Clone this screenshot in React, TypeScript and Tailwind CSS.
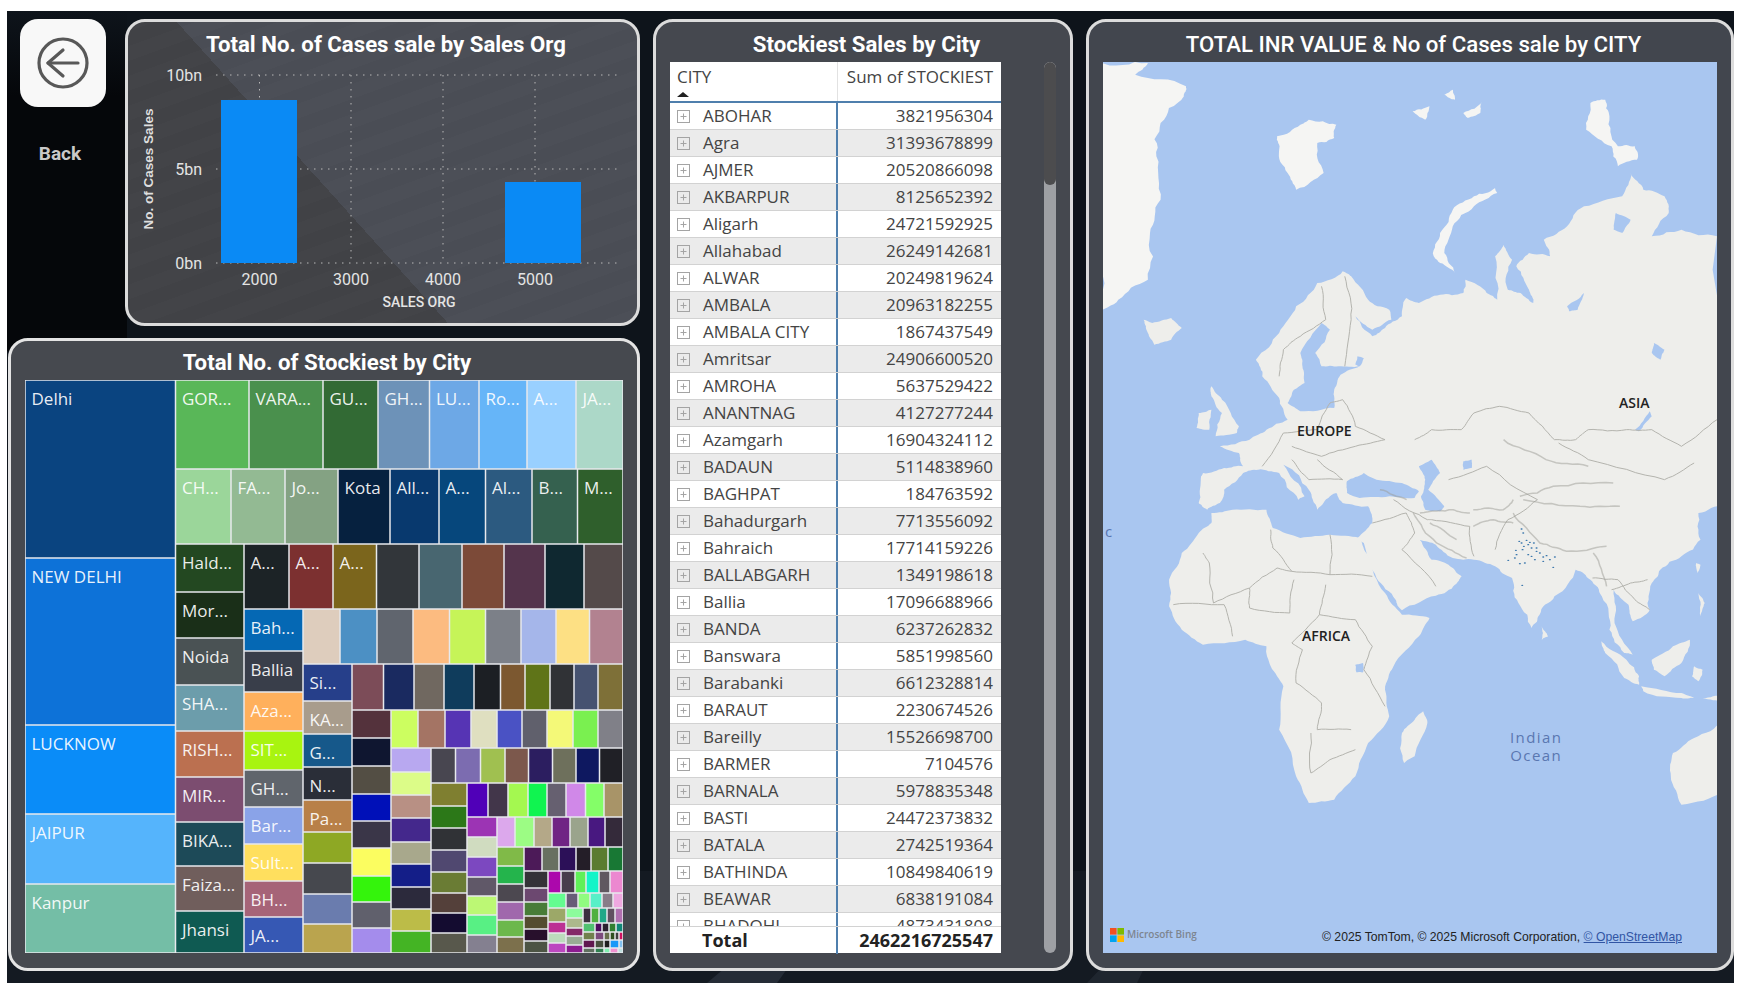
import React from 'react';

type Cell = { x: number; y: number; w: number; h: number; color: string; label?: string };

// items are "color" or "color|label"
const row = (y0: number, y1: number, xs: number[], items: string[]): Cell[] =>
  items.map((it, i) => {
    const [color, label] = it.split('|');
    return { x: xs[i], y: y0, w: xs[i + 1] - xs[i], h: y1 - y0, color, label };
  });

const col = (x0: number, x1: number, ys: number[], items: string[]): Cell[] =>
  items.map((it, i) => {
    const [color, label] = it.split('|');
    return { x: x0, y: ys[i], w: x1 - x0, h: ys[i + 1] - ys[i], color, label };
  });

const cells: Cell[] = [
  ...col(25, 175.5, [380, 558, 725, 814, 884, 953], ['#0a4480|Delhi', '#0d72d8|NEW DELHI', '#0a8cf8|LUCKNOW', '#55b4fc|JAIPUR', '#74bea6|Kanpur']),
  ...row(380, 469, [175.5, 249, 323, 378, 429.5, 479, 527, 576, 623], ['#59b758|GOR...', '#4a904d|VARA...', '#326a34|GU...', '#6d92b8|GH...', '#6da8e6|LU...', '#66b5f8|Ro...', '#99d0ff|A...', '#acd8c8|JA...']),
  ...row(469, 544, [175.5, 231, 285, 338, 390, 439, 485.5, 532, 577.5, 623], ['#9bd69a|CH...', '#93ba93|FA...', '#84a283|Jo...', '#06213f|Kota', '#08396e|All...', '#06477c|A...', '#2c5a80|Al...', '#35614f|B...', '#2f5f2c|M...']),
  ...col(175.5, 244, [544, 592, 638, 685, 731, 777, 822, 866, 911, 953], ['#234821|Hald...', '#1a2f18|Mor...', '#4a5254|Noida', '#6c9dab|SHA...', '#bb7050|RISH...', '#7c4d70|MIR...', '#1d4a58|BIKA...', '#705e5c|Faiza...', '#0f5a52|Jhansi']),
  ...row(544, 609, [244, 289, 333, 376.5, 419, 462, 504, 545, 584, 623], ['#1c2326|A...', '#7c3030|A...', '#7b651c|A...', '#32363a', '#486670', '#7c4a38', '#54344c', '#0f2830', '#544a4a']),
  ...col(244, 303, [609, 651, 692, 731, 770, 807, 844, 881, 917, 953], ['#0568b4|Bah...', '#393e4a|Ballia', '#ffb05c|Aza...', '#a8f410|SIT...', '#60656c|GH...', '#8aa3e8|Bar...', '#ffdf5e|Sult...', '#a66478|BH...', '#3658b4|JA...']),
  ...row(609, 664, [303, 340, 377, 413, 449.5, 485.5, 521, 556, 589.5, 623], ['#decdbd', '#4c90c4', '#60656e', '#fcbb80', '#c6f458', '#7c8088', '#a5b6ea', '#fde084', '#b28290']),
  ...col(303, 352, [664, 701, 734, 767, 800, 832, 863, 894, 924, 953], ['#263f8a|Si...', '#a89c8c|KA...', '#16588a|G...', '#2a2e38|N...', '#b88048|Pa...', '#8ea824', '#46484e', '#6a7cae', '#baa44e']),
  ...row(664, 710, [352, 383.5, 414, 444, 474, 500.5, 525, 550, 574, 598, 623], ['#7c4c58', '#1a2a60', '#706860', '#0f3c5c', '#1c1f24', '#7c5830', '#5f7418', '#303236', '#465270', '#7e7038']),
  ...col(352, 391, [710, 738, 766, 794, 821, 848, 876, 902, 928, 953], ['#54323c', '#0f1630', '#534e44', '#0010b8', '#3a3648', '#fbfd60', '#34f40c', '#60606c', '#a48cec']),
  ...row(710, 748, [391, 418, 445, 471, 497, 522, 547, 573, 598, 623], ['#ccfe60', '#a47464', '#5634b4', '#dfdfc0', '#4a52c4', '#60606c', '#f4f978', '#7af050', '#808088']),
  ...col(391, 431, [748, 772, 795, 818, 842, 864, 887, 909, 931, 953], ['#b8a8f0', '#dcfc88', '#b89084', '#44288c', '#a8a88c', '#141e88', '#2c2a3c', '#bcbc48', '#44b424']),
  ...row(748, 783, [431, 455.5, 480.5, 505, 528.5, 552.5, 576, 599.5, 623], ['#484650', '#7c6cb0', '#a0c050', '#7c584c', '#2c1e60', '#6e705c', '#0e1860', '#202026']),
  ...col(431, 467, [783, 806, 828, 850, 872, 893, 913, 933, 953], ['#7f7f30', '#2c7818', '#303236', '#504870', '#6a7c34', '#54403a', '#140c30', '#58584c']),
  ...row(783, 817, [467, 488, 508, 528, 547, 566, 585.5, 604, 623], ['#5000b8', '#42364a', '#a4f850', '#10f450', '#666070', '#d088e8', '#84fe68', '#a89468']),
  ...col(467, 497, [817, 837, 857, 877, 896, 915, 935, 953], ['#9c34b4', '#d0dcc0', '#7c48c0', '#605868', '#bcf874', '#58f084', '#848090']),
  ...row(817, 847, [497, 515, 534, 552, 570, 588, 605, 623], ['#dca8ec', '#9cfc84', '#b4a888', '#702484', '#9aa48c', '#481880', '#342a3a']),
  ...col(497, 524, [847, 866, 884, 902, 920, 937, 953], ['#80ba48', '#24b44c', '#4c4850', '#a068ac', '#6cb84c', '#7c704c']),
  ...row(847, 871, [524, 542, 559, 576, 591, 608, 623], ['#4c1a58', '#687060', '#2c1058', '#241e28', '#5a7c30', '#187834']),
  ...col(524, 548, [871, 888, 902, 916, 929, 941, 953], ['#343238', '#6c4870', '#487c38', '#544c30', '#28102c', '#4c5444']),
  ...row(871, 893, [548, 561, 575, 586, 599, 610, 623], ['#ac08ac', '#483c4c', '#60f058', '#14f4c8', '#605860', '#ec88d0']),
  ...row(893, 908, [548, 566, 578, 590, 602, 613, 623], ['#64fc90', '#685c78', '#90fc80', '#58f0c8', '#887c88', '#eea8e0']),
  ...col(548, 566, [908, 922, 933, 943, 953], ['#9ca868', '#bc3094', '#bcdcbc', '#bc48c0']),
  ...col(566, 583, [908, 918, 928, 936, 945, 953], ['#8cfc9c', '#acb88c', '#842868', '#98ac94', '#8c1c90']),
  ...row(908, 923, [583, 591, 599, 607, 615, 623], ['#3c3040', '#50b040', '#20a888', '#605060', '#b070b0']),
  ...row(923, 932, [583, 595, 602, 609, 616, 623], ['#50c070', '#4c0c5c', '#2c2030', '#308030', '#108878']),
  ...row(932, 940, [583, 595, 604, 610, 615, 619, 623], ['#70804c', '#7c4c7c', '#68704c', '#305020', '#404040', '#d01060']),
  ...row(940, 948, [583, 595, 604, 610, 619, 623], ['#601850', '#485040', '#202020', '#1898f8', '#80c0f0']),
  ...row(948, 953, [583, 595, 604, 610, 618, 623], ['#607060', '#308050', '#80f0b0', '#f090d0', '#c0e0e0']),
];

const cities: [string, string][] = [
  ['ABOHAR', '3821956304'], ['Agra', '31393678899'], ['AJMER', '20520866098'], ['AKBARPUR', '8125652392'],
  ['Aligarh', '24721592925'], ['Allahabad', '26249142681'], ['ALWAR', '20249819624'], ['AMBALA', '20963182255'],
  ['AMBALA CITY', '1867437549'], ['Amritsar', '24906600520'], ['AMROHA', '5637529422'], ['ANANTNAG', '4127277244'],
  ['Azamgarh', '16904324112'], ['BADAUN', '5114838960'], ['BAGHPAT', '184763592'], ['Bahadurgarh', '7713556092'],
  ['Bahraich', '17714159226'], ['BALLABGARH', '1349198618'], ['Ballia', '17096688966'], ['BANDA', '6237262832'],
  ['Banswara', '5851998560'], ['Barabanki', '6612328814'], ['BARAUT', '2230674526'], ['Bareilly', '15526698700'],
  ['BARMER', '7104576'], ['BARNALA', '5978835348'], ['BASTI', '24472373832'], ['BATALA', '2742519364'],
  ['BATHINDA', '10849840619'], ['BEAWAR', '6838191084'], ['BHADOHI', '4873431808'],
];

const TITLE = "font-['Roboto',sans-serif]";
const BODY = "font-['Open_Sans',sans-serif]";

function BackIcon() {
  return (
    <svg width="52" height="52" viewBox="0 0 52 52" fill="none" stroke="#585858" strokeWidth="3.2" strokeLinecap="round" strokeLinejoin="round">
      <circle cx="26" cy="26" r="24" />
      <path d="M41 26H11" />
      <path d="M26 13L11 26l15 13" />
    </svg>
  );
}

function BarChart() {
  const grid = [259.5, 351, 443, 535];
  return (
    <svg viewBox="128 62 509 261" className={`block h-[261px] w-[509px] ${TITLE}`}>
      {[75, 169, 263].map((y) => (
        <line key={y} x1="216" x2="622" y1={y} y2={y} stroke="#b9b9b9" strokeWidth="1" strokeDasharray="1.5 5.5" />
      ))}
      {grid.map((x) => (
        <line key={x} x1={x} x2={x} y1="75" y2="263" stroke="#b9b9b9" strokeWidth="1" strokeDasharray="1.5 5.5" />
      ))}
      <rect x="221" y="100" width="76" height="163" fill="#0a8af5" />
      <rect x="505" y="182" width="76" height="81" fill="#0a8af5" />
      {[['10bn', 81], ['5bn', 175], ['0bn', 269]].map(([t, y]) => (
        <text key={t} x="202" y={y} textAnchor="end" fontSize="16" fill="#e4e4e4">{t}</text>
      ))}
      {['2000', '3000', '4000', '5000'].map((t, i) => (
        <text key={t} x={grid[i]} y="285" textAnchor="middle" fontSize="16" fill="#e4e4e4">{t}</text>
      ))}
      <text x="419" y="307" textAnchor="middle" fontSize="14" fontWeight="500" fill="#e4e4e4">SALES ORG</text>
      <text
        transform="translate(153 169) rotate(-90)"
        textAnchor="middle"
        fontSize="13.5"
        fontWeight="700"
        fill="#dedede"
        className="font-['Liberation_Sans',sans-serif]"
      >
        No. of Cases Sales
      </text>
    </svg>
  );
}

function Treemap() {
  return (
    <svg viewBox="25 380 598 573" className={`block h-[573px] w-[598px] ${BODY}`}>
      <rect x="25" y="380" width="598" height="573" fill="#e7e9ed" />
      {cells.map((c, i) => (
        <g key={i}>
          <rect x={c.x + 0.75} y={c.y + 0.75} width={Math.max(c.w - 1.5, 0.5)} height={Math.max(c.h - 1.5, 0.5)} fill={c.color} />
          {c.label && (
            <text x={c.x + 6.5} y={c.y + 24.5} fontSize="17" fill="#ffffff" fillOpacity="0.92">{c.label}</text>
          )}
        </g>
      ))}
    </svg>
  );
}

function PlusBox() {
  return (
    <svg width="13" height="13" viewBox="0 0 13 13" fill="none" className="shrink-0" stroke="#a4a4a4">
      <rect x="0.5" y="0.5" width="12" height="12" />
      <path d="M6.5 3.5v6M3.5 6.5h6" />
    </svg>
  );
}

function StockTable() {
  return (
    <div className={`flex h-[891px] w-[331px] flex-col bg-white text-[#444444] ${BODY}`}>
      <div className="grid h-[41px] shrink-0 grid-cols-[168px_163px] border-b-2 border-[#4f7fad]">
        <div className="relative border-r border-[#e2e2e2] pl-[7px] pt-[2px] text-[17px] leading-[26px]">
          CITY
          <span className="absolute bottom-[4px] left-[7px] h-0 w-0 border-x-[6px] border-b-[5px] border-x-transparent border-b-[#222222]" />
        </div>
        <div className="pr-[8px] pt-[2px] text-right text-[17px] leading-[26px]">Sum of STOCKIEST</div>
      </div>
      <div className="min-h-0 flex-1 overflow-hidden">
        {cities.map(([name, value], i) => (
          <div
            key={name}
            className={`grid h-[27px] grid-cols-[168px_163px] border-b border-[#d2d2d2] text-[17px] leading-[26px] ${i % 2 ? 'bg-[#ebebeb]' : 'bg-white'}`}
          >
            <div className="flex items-center gap-[13px] border-r-2 border-[#4f7fad] pl-[7px]">
              <PlusBox />
              <span className="whitespace-nowrap">{name}</span>
            </div>
            <div className="pr-[8px] text-right">{value}</div>
          </div>
        ))}
      </div>
      <div className="grid h-[27px] shrink-0 grid-cols-[168px_163px] border-t border-[#d2d2d2] text-[18px] font-bold leading-[27px] text-[#222222]">
        <div className="border-r-2 border-[#4f7fad] pl-[32px]">Total</div>
        <div className="pr-[8px] text-right">2462216725547</div>
      </div>
    </div>
  );
}

// map coordinates: x = (page x - 1080) * 2.36, y = page y * 3
const Y = (n: number) => n + 1470;
const Z = (list: number[][]) => list.map(([x, y]) => [708 + x * 0.787, 1440 + y]);

// breaks up straight segments so that coasts and borders don't look like polygons
function rough(list: number[][], amount: number, closed = true): string {
  let seed = list.length * 7 + Math.round(list[0][0] + list[0][1]);
  const rnd = () => {
    seed = (seed * 9301 + 49297) % 233280;
    return seed / 233280 - 0.5;
  };
  let cur = list;
  for (let pass = 0; pass < 3; pass++) {
    const next: number[][] = [];
    const n = closed ? cur.length : cur.length - 1;
    for (let i = 0; i < n; i++) {
      const a = cur[i];
      const b = cur[(i + 1) % cur.length];
      const dx = b[0] - a[0];
      const dy = b[1] - a[1];
      const k = rnd() * amount;
      next.push(a, [(a[0] + b[0]) / 2 - dy * k, (a[1] + b[1]) / 2 + dx * k]);
    }
    if (!closed) next.push(cur[cur.length - 1]);
    cur = next;
  }
  return cur.map(([x, y]) => `${x.toFixed(1)},${y.toFixed(1)}`).join(' ');
}

const eurasia = [
  [620, 815], [640, 830], [680, 900], [730, 930], [735, 960], [690, 990], [650, 950], [690, 1010], [720, 985], [760, 950], [770, 895], [800, 910], [850, 885],
  [905, 880], [910, 840], [960, 880], [985, 900], [980, 770], [1000, 735], [1020, 780], [1010, 870], [1040, 880], [1070, 910], [1060, 870], [1030, 800], [1060, 760],
  [1110, 770], [1095, 720], [1150, 680], [1190, 620], [1280, 590], [1300, 520], [1330, 570], [1380, 590], [1390, 640], [1350, 710], [1420, 690], [1504, 710],
  [1520, Y(40)], [1460, Y(70)], [1465, Y(150)], [1420, Y(200)], [1370, Y(240)], [1350, Y(280)], [1345, Y(360)], [1305, Y(395)], [1295, Y(345)], [1260, Y(300)],
  [1262, Y(400)], [1305, Y(495)], [1285, Y(490)], [1250, Y(420)], [1232, Y(320)], [1205, Y(270)], [1170, Y(240)], [1120, Y(320)], [1085, Y(375)], [1066, Y(415)],
  [1035, Y(340)], [1020, Y(265)], [980, Y(230)], [930, Y(210)], [880, Y(205)], [840, Y(165)], [802, Y(150)], [830, Y(210)], [870, Y(225)], [901, Y(260)], [885, Y(285)],
  [840, Y(318)], [760, Y(362)], [745, Y(330)], [700, Y(265)], [670, Y(160)], [655, Y(145)], [690, Y(100)], [680, Y(50)], [620, Y(40)], [605, 1480], [590, 1490], [560, 1530],
  [540, 1470], [480, 1395], [530, 1490], [515, 1500], [470, 1420], [420, 1410], [385, 1420], [340, 1470], [330, 1510], [300, 1530], [280, 1510], [285, 1440], [290, 1420],
  [340, 1405], [385, 1400], [375, 1360], [330, 1340], [400, 1320], [440, 1290], [490, 1260], [470, 1195], [430, 1130], [415, 1080], [470, 1000], [510, 920], [560, 850],
];
const africa = [
  [310, Y(70)], [360, Y(60)], [440, Y(60)], [455, Y(115)], [520, Y(145)], [590, Y(135)], [660, Y(145)], [680, Y(200)], [720, Y(310)], [760, Y(375)], [825, Y(385)],
  [800, Y(440)], [740, Y(530)], [720, Y(600)], [730, Y(680)], [680, Y(760)], [650, Y(860)], [600, Y(930)], [540, Y(940)], [510, Y(860)], [470, Y(720)], [480, Y(590)],
  [450, Y(530)], [440, Y(470)], [390, Y(450)], [290, Y(465)], [240, Y(420)], [210, Y(350)], [210, Y(270)], [240, Y(190)], [280, Y(130)], [310, Y(100)],
];
const arctic = [
  [[40, 190], [160, 190], [130, 225], [250, 260], [245, 290], [190, 370], [180, 470], [190, 600], [165, 700], [160, 840], [90, 900], [40, 945]],
  [[465, 410], [520, 375], [540, 360], [605, 375], [600, 415], [560, 430], [575, 520], [510, 570], [490, 520], [470, 450]],
  [[905, 340], [950, 305], [945, 340], [915, 355]],
  [[785, 335], [825, 320], [815, 360]],
  [[860, 285], [880, 270], [885, 300]],
  [[1205, 310], [1240, 300], [1250, 350], [1270, 440], [1310, 440], [1315, 480], [1270, 500], [1255, 440], [1195, 390]],
  [[980, 565], [985, 580], [930, 620], [880, 680], [860, 760], [885, 820], [850, 790], [835, 770], [850, 700], [880, 630], [930, 590]],
];
const islands = [
  [[150, 960], [170, 970], [215, 955], [240, 985], [215, 1020], [175, 1035], [160, 1000]],
  [[310, 1160], [335, 1200], [375, 1280], [370, 1300], [320, 1310], [335, 1240], [310, 1190]],
  [[280, 1240], [310, 1230], [305, 1290], [275, 1285]],
  [[810, Y(665)], [820, Y(700)], [790, Y(800)], [765, Y(820)], [760, Y(730)], [790, Y(690)]],
  [[1090, Y(410)], [1105, Y(440)], [1090, Y(450)]],
  [[1520, Y(695)], [1520, Y(910)], [1420, Y(945)], [1395, Y(860)], [1400, Y(790)], [1450, Y(745)]],
  [[1230, Y(455)], [1290, Y(510)], [1320, Y(560)], [1320, Y(585)], [1285, Y(565)], [1240, Y(490)]],
  [[1325, Y(590)], [1420, Y(610)], [1450, Y(625)], [1420, Y(625)], [1330, Y(605)]],
  [[1350, Y(510)], [1400, Y(470)], [1440, Y(450)], [1420, Y(520)], [1380, Y(560)], [1355, Y(540)]],
  [[1450, Y(530)], [1470, Y(540)], [1460, Y(575)], [1445, Y(560)]],
  [[1460, Y(310)], [1475, Y(340)], [1465, Y(380)]],
  [[1455, Y(220)], [1465, Y(225)], [1458, Y(250)]],
  [[1470, Y(625)], [1520, Y(620)], [1520, Y(635)]],
];
const waters = [
  [[520, 1060], [570, 970], [590, 990], [555, 1060], [570, 1100], [610, 1100], [660, 1100], [615, 1125], [600, 1170], [600, 1225], [520, 1235], [490, 1210], [505, 1170], [530, 1150], [525, 1100]],
  [[630, 1445], [670, 1420], [700, 1440], [760, 1450], [800, 1475], [790, 1495], [730, 1490], [660, 1495], [630, 1480]],
  [[800, 1400], [830, 1380], [850, 1420], [822, 1470], [860, 1520], [850, 1535], [815, 1530], [805, 1490], [815, 1440]],
  [[905, 1385], [925, 1380], [925, 1405], [905, 1410]],
  [[655, 1070], [670, 1075], [660, 1100], [650, 1095]],
  [[1355, 1030], [1380, 1050], [1370, 1080], [1350, 1060]],
  [[1150, 920], [1190, 880], [1175, 930], [1155, 935]],
  [[1345, 1235], [1310, 1290], [1320, 1295], [1350, 1250]],
  [[650, Y(525)], [668, Y(520)], [668, Y(548)], [652, Y(548)]],
  [[1265, 640], [1300, 660], [1280, 700], [1260, 690]],
];
const borders = [
  [[450, Y(120)], [455, Y(175)], [500, Y(245)], [590, Y(255)], [590, Y(135)]],
  [[590, Y(255)], [690, Y(260)]],
  [[290, Y(190)], [305, Y(220)], [315, Y(340)], [400, Y(295)], [465, Y(235)], [500, Y(245)]],
  [[400, Y(295)], [400, Y(355)], [495, Y(370)], [505, Y(270)]],
  [[580, Y(285)], [565, Y(375)], [500, Y(460)], [525, Y(480)], [510, Y(580)], [570, Y(640)], [560, Y(720)], [640, Y(720)]],
  [[565, Y(375)], [650, Y(390)], [690, Y(470)], [670, Y(540)], [720, Y(650)]],
  [[545, Y(730)], [545, Y(850)], [590, Y(810)], [650, Y(780)]],
  [[220, Y(345)], [340, Y(345)], [360, Y(440)]],
  [[790, 1320], [830, 1290], [900, 1290], [930, 1240], [990, 1220], [1060, 1240], [1120, 1320], [1170, 1320], [1200, 1290], [1290, 1290], [1350, 1290], [1420, 1340], [1504, 1260]],
  [[1130, 1330], [1200, 1380], [1380, 1440], [1450, 1390]],
  [[720, 1320], [650, 1280], [620, 1200], [590, 1210], [560, 1290], [480, 1300], [430, 1400]],
  [[570, 860], [580, 960], [520, 1010], [480, 1050], [470, 1130]],
  [[625, 830], [640, 960], [625, 1100]],
  [[500, 1340], [570, 1370], [650, 1340], [720, 1320]],
  [[560, 1380], [620, 1440], [540, 1440], [500, 1380]],
  [[690, Y(100)], [770, Y(70)], [790, Y(130)], [760, Y(180)], [840, Y(290)]],
  [[870, 1440], [960, 1400], [1080, 1500], [1010, 1560], [980, Y(180)]],
  [[740, 1500], [820, 1560], [830, Y(90)], [920, Y(110)], [930, Y(200)]],
  [[1210, Y(265)], [1270, Y(270)], [1310, Y(330)], [1345, Y(360)]],
  [[1255, Y(300)], [1300, Y(280)], [1340, Y(270)]],
];
const ridges = [
  Z([[100, 100], [170, 190], [260, 235]]),
  Z([[120, 100], [220, 90], [270, 100]]),
  Z([[280, 90], [370, 90], [400, 60]]),
  Z([[400, 100], [480, 190], [560, 215], [680, 200]]),
  Z([[420, 50], [520, 20], [700, 10]]),
  Z([[430, 60], [600, 80], [720, 80]]),
  Z([[640, 220], [680, 320]]),
  Z([[0, 30], [80, 60]]),
  Z([[280, 140], [340, 120], [400, 130]]),
  Z([[150, 130], [230, 180]]),
  [[1000, 1320], [1100, 1380], [1200, 1400]],
];
const dots = Z([
  [425, 148], [430, 160], [418, 185], [425, 190], [440, 182], [450, 188], [462, 190], [455, 205], [445, 195], [432, 200], [408, 212], [410, 225], [405, 235], [385, 242], [428, 210],
  [470, 215], [480, 220], [490, 232], [500, 228], [510, 240], [525, 232], [465, 240], [445, 225], [435, 250], [420, 252], [520, 263], [427, 317], [470, 205], [455, 230], [490, 245],
]);

function WorldMap() {
  return (
    <div className="relative h-[891px] w-[614px] overflow-hidden bg-[#a9c6f0]">
      <svg viewBox="54 187 1450 2673" preserveAspectRatio="none" className="block h-full w-full blur-[0.5px]">
        <g fill="#f5f5f3">
          {arctic.map((p, i) => <polygon key={i} points={rough(p, 0.22)} />)}
        </g>
        <g fill="#eeeeeb">
          <polygon points={rough(eurasia, 0.2)} />
          <polygon points={rough(africa, 0.12)} />
          {islands.map((p, i) => <polygon key={i} points={rough(p, 0.16)} />)}
        </g>
        <g fill="#a9c6f0">
          {waters.map((p, i) => <polygon key={i} points={rough(p, 0.14)} />)}
        </g>
        <g fill="none" stroke="#b4b4ae" strokeWidth="1">
          {borders.map((p, i) => <polyline key={i} points={rough(p, 0.1, false)} vectorEffect="non-scaling-stroke" />)}
        </g>
        <g fill="none" stroke="#9c9c95" strokeWidth="1.5" strokeOpacity="0.5">
          {ridges.map((p, i) => <polyline key={i} points={rough(p, 0.16, false)} vectorEffect="non-scaling-stroke" />)}
        </g>
        <g fill="#2f6fa8">
          {dots.map(([x, y], i) => <ellipse key={i} cx={x} cy={y} rx="2.5" ry="2" />)}
        </g>
      </svg>
      <span className={`absolute left-[194px] top-[358px] text-[14px] font-semibold text-[#222222] ${BODY}`}>EUROPE</span>
      <span className={`absolute left-[516px] top-[330px] text-[14px] font-semibold text-[#222222] ${BODY}`}>ASIA</span>
      <span className={`absolute left-[199px] top-[563px] text-[14px] font-semibold text-[#222222] ${BODY}`}>AFRICA</span>
      <span className={`absolute left-[407px] top-[666px] text-center text-[15px] leading-[18px] tracking-[1.4px] text-[#5a77b0] ${BODY}`}>
        Indian<br />Ocean
      </span>
      <span className={`absolute left-[2px] top-[458px] text-[15px] text-[#5a77b0] ${BODY}`}>c</span>
      <div className="absolute bottom-[11px] left-[7px] flex items-center gap-[3px]">
        <svg width="14" height="14" viewBox="0 0 14 14">
          <rect width="6.6" height="6.6" fill="#f25022" />
          <rect x="7.4" width="6.6" height="6.6" fill="#7fba00" />
          <rect y="7.4" width="6.6" height="6.6" fill="#00a4ef" />
          <rect x="7.4" y="7.4" width="6.6" height="6.6" fill="#ffb900" />
        </svg>
        <span className={`text-[10px] font-semibold text-[#7d8590] ${BODY}`}>Microsoft Bing</span>
      </div>
      <div className="absolute bottom-[7px] right-[35px] whitespace-nowrap font-['Liberation_Sans',sans-serif] text-[12.2px] text-[#222222]">
        © 2025 TomTom, © 2025 Microsoft Corporation, <span className="text-[#3155a4] underline">© OpenStreetMap</span>
      </div>
    </div>
  );
}

function Backdrop() {
  return (
    <svg viewBox="0 0 1727 972" preserveAspectRatio="none" className="absolute inset-0 h-full w-full">
      <defs>
        <linearGradient id="bg-left" x1="0" y1="0" x2="0" y2="1">
          <stop offset="0" stopColor="#0e141b" />
          <stop offset="0.25" stopColor="#05070a" />
          <stop offset="1" stopColor="#05070a" />
        </linearGradient>
      </defs>
      <rect width="1727" height="972" fill="#0e141b" />
      <rect width="120" height="340" fill="url(#bg-left)" />
      <rect y="860" width="1727" height="112" fill="#141a22" />
      <polygon points="700,972 750,930 800,930 770,972" fill="#3a4350" fillOpacity="0.45" />
      <polygon points="1080,972 1120,930 1150,930 1130,972" fill="#3a4350" fillOpacity="0.3" />
    </svg>
  );
}

export default function App() {
  return (
    <div className="h-[993px] w-[1744px] overflow-hidden bg-white pl-[7px] pt-[11px]">
      <div className="relative flex h-[972px] w-[1727px] gap-[13px] pl-[1px] pt-[8px]">
        <Backdrop />
        <div className="relative flex w-[632px] flex-col gap-[12px]">
          <div className="flex h-[307px]">
            <div className="ml-[12px] w-[105px] shrink-0">
              <div className="flex h-[88px] w-[86px] items-center justify-center rounded-[18px] bg-[#f8f8f8]">
                <BackIcon />
              </div>
              <div className={`mt-[35px] w-[80px] text-center text-[19px] font-bold leading-[24px] text-[#c9c9c9] ${TITLE}`}>Back</div>
            </div>
            <div className="h-[307px] w-[515px] rounded-[20px] border-[3px] border-[#dcdcdc] bg-[repeating-linear-gradient(-20deg,rgba(255,255,255,0.012)_0_14px,transparent_14px_28px),linear-gradient(48deg,#414246_41%,#4a4d55_41%)]">
              <div className={`h-[40px] pl-[7px] text-center text-[22.2px] font-bold leading-[44px] text-white ${TITLE}`}>Total No. of Cases sale by Sales Org</div>
              <BarChart />
            </div>
          </div>
          <div className="h-[633px] w-[632px] rounded-[20px] border-[3px] border-[#e4e4e4] bg-[#46494f]">
            <div className={`h-[39px] pl-[6px] text-center text-[22.2px] font-bold leading-[42px] text-white ${TITLE}`}>Total No. of Stockiest by City</div>
            <div className="pl-[14px]">
              <Treemap />
            </div>
          </div>
        </div>
        <div className="relative h-[952px] w-[420px] rounded-[20px] border-[3px] border-[#dcdcdc] bg-[#45484f]">
          <div className={`h-[40px] pl-[7px] text-center text-[22.2px] font-bold leading-[44px] text-white ${TITLE}`}>Stockiest Sales by City</div>
          <div className="flex gap-[43px] pl-[14px]">
            <StockTable />
            <div className="h-[891px] w-[12px] overflow-hidden rounded-full bg-[#9ea0a4]">
              <div className="h-[123px] rounded-full bg-[#4c4c4e]" />
            </div>
          </div>
        </div>
        <div className="relative h-[952px] w-[648px] rounded-[20px] border-[3px] border-[#dcdcdc] bg-[#42464e]">
          <div className={`h-[40px] pl-[7px] text-center text-[22.2px] font-medium leading-[44px] text-white ${TITLE}`}>TOTAL INR VALUE &amp; No of Cases sale by CITY</div>
          <div className="pl-[14px]">
            <WorldMap />
          </div>
        </div>
      </div>
    </div>
  );
}
